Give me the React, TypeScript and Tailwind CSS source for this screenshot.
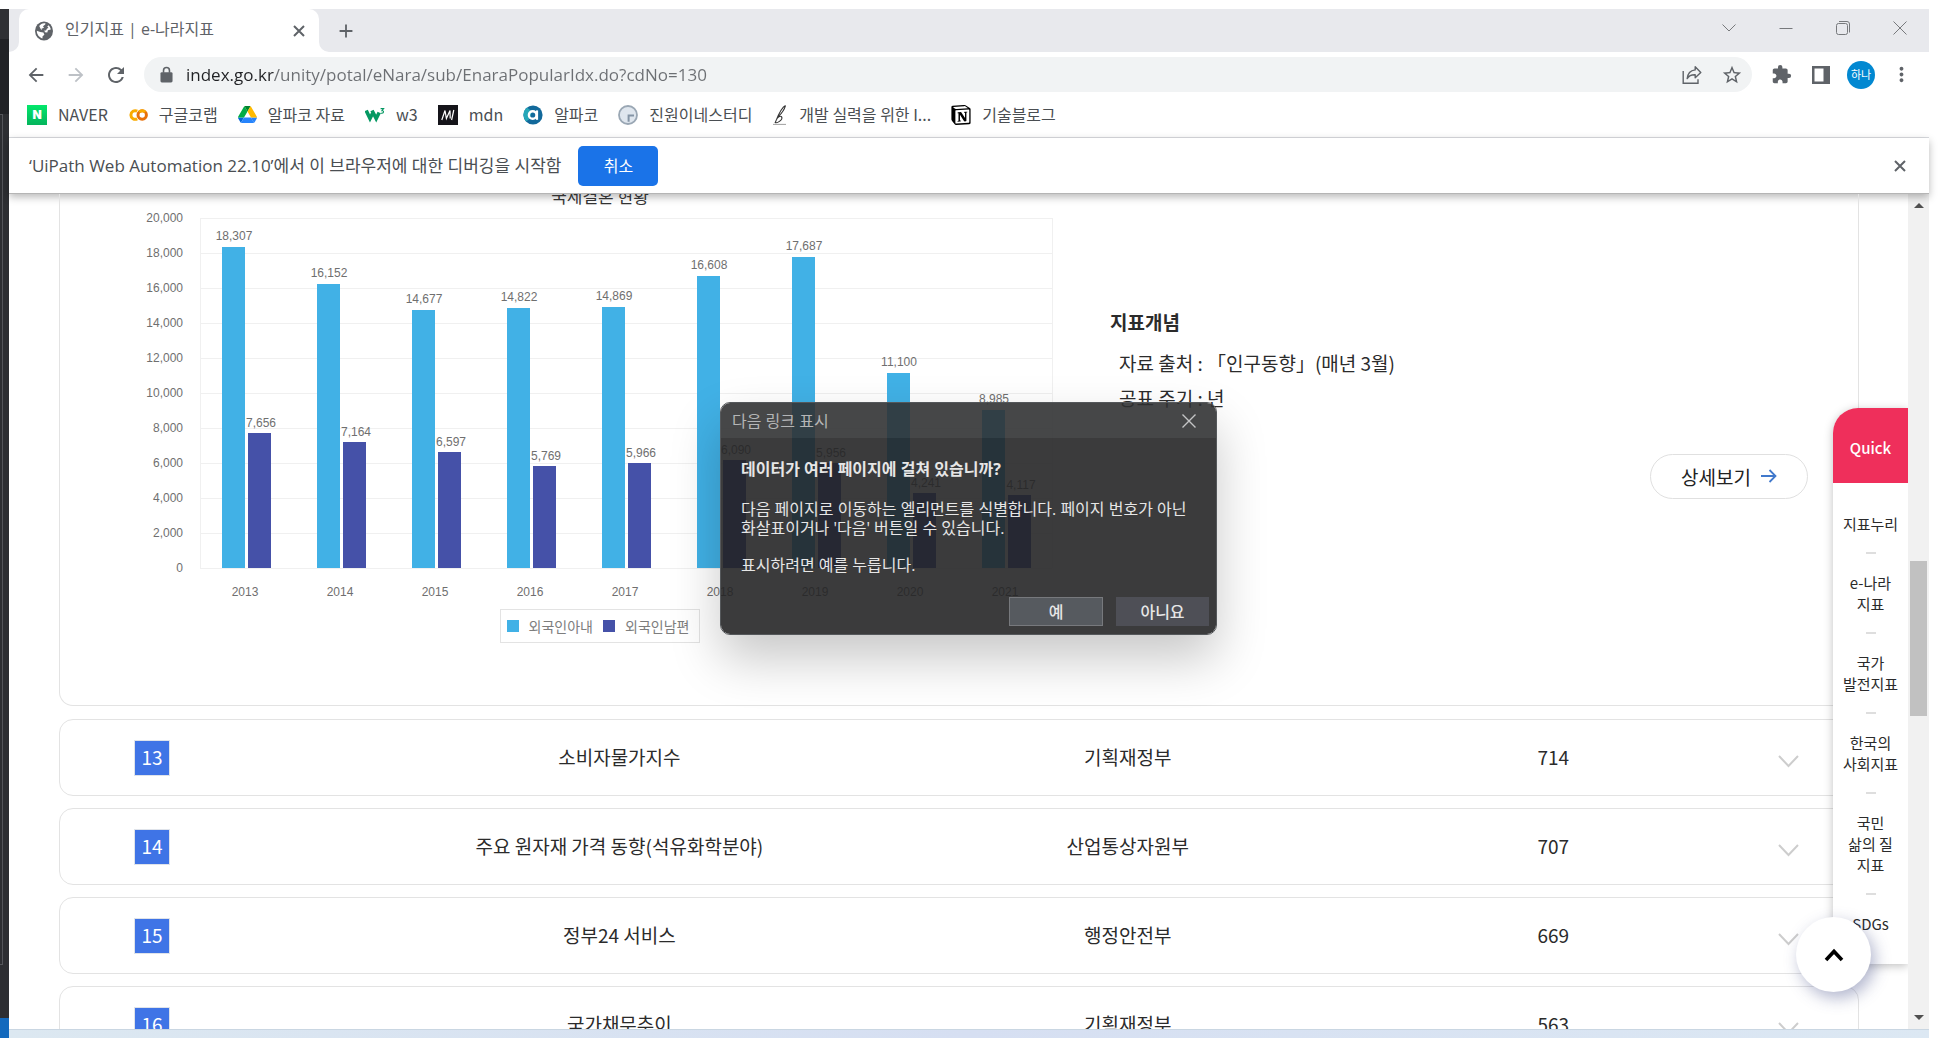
import React from "react";
import {
  MdAdd,
  MdArrowBack,
  MdArrowForward,
  MdExtension,
  MdMoreVert,
  MdRefresh,
  MdStarBorder,
} from "react-icons/md";
import { SiNotion } from "react-icons/si";

const years = [
  { year: "2013", wife: 18307, husband: 7656 },
  { year: "2014", wife: 16152, husband: 7164 },
  { year: "2015", wife: 14677, husband: 6597 },
  { year: "2016", wife: 14822, husband: 5769 },
  { year: "2017", wife: 14869, husband: 5966 },
  { year: "2018", wife: 16608, husband: 6090 },
  { year: "2019", wife: 17687, husband: 5956 },
  { year: "2020", wife: 11100, husband: 4241 },
  { year: "2021", wife: 8985, husband: 4117 },
];

const rows = [
  { rank: 13, name: "소비자물가지수", agency: "기획재정부", count: 714 },
  { rank: 14, name: "주요 원자재 가격 동향(석유화학분야)", agency: "산업통상자원부", count: 707 },
  { rank: 15, name: "정부24 서비스", agency: "행정안전부", count: 669 },
  { rank: 16, name: "국가채무추이", agency: "기획재정부", count: 563 },
];

const quickLinks = [["지표누리"], ["e-나라", "지표"], ["국가", "발전지표"], ["한국의", "사회지표"], ["국민", "삶의 질", "지표"], ["SDGs"]];

const GlobeIcon = () => (
  <svg viewBox="0 0 18 20" className="h-5 w-[18px]">
    <ellipse cx="9" cy="10" rx="9" ry="9.500" fill="#5f6368" />
    <path d="M10.500 2.400c-2.500-.6-5 .6-6.300 2.600L6 8.500l3.500.8.3 1.900 2.500.4.600-2.400 2.900-.6c-.3-1.800-1-3.200-2.200-4.400l-1.200 1.400-2.400-.6z" fill="#fff" />
    <path d="M1.800 9.800c0 3.800 2.400 6.800 5.600 7.600l.2-2.200 1.800-1.400-1-2.200-3.200-.6z" fill="#fff" />
    <path d="M10.500 3.200 8 5.200l1 1.600-2.600 1 1 1.400 3.600.4 1-2.200 1.500-.4" fill="#5f6368" />
  </svg>
);

const LockIcon = () => (
  <svg viewBox="0 0 14 18" className="h-[17px] w-[13px] shrink-0">
    <rect x="0.500" y="6.500" width="13" height="11" rx="1.500" fill="currentColor" />
    <path d="M3.800 7V4.600a3.200 3.200 0 0 1 6.400 0V7" fill="none" stroke="currentColor" strokeWidth="1.700" />
  </svg>
);

const CrossIcon = () => (
  <svg viewBox="0 0 12 12" className="size-3" fill="none" stroke="currentColor" strokeWidth="2">
    <path d="M1 1l10 10M11 1L1 11" />
  </svg>
);

const NaverIcon = () => (
  <span className="flex size-5 items-center justify-center bg-gradient-to-b from-[#03e86b] to-[#04b45c] font-['Inter'] text-[12px] leading-none font-black text-white">
    N
  </span>
);

const ColabIcon = () => (
  <svg viewBox="0 0 20 20" className="size-5" fill="none" strokeWidth="3">
    <path d="M9.200 6.200A4.300 4.300 0 1 0 9.200 13.800" stroke="#f9ab00" />
    <circle cx="14.200" cy="10" r="4.200" stroke="#e8710a" />
    <path d="M11.200 7a4.200 4.200 0 0 1 5.900 0" stroke="#f9ab00" />
  </svg>
);

const DriveIcon = () => (
  <svg viewBox="0 0 87.3 78" className="size-[19px]">
    <path d="m6.6 66.85 3.85 6.65c.8 1.4 1.95 2.5 3.3 3.3l13.75-23.8h-27.5c0 1.55.4 3.1 1.2 4.5z" fill="#0066da" />
    <path d="m43.65 25-13.75-23.8c-1.35.8-2.5 1.9-3.3 3.3l-25.4 44a9.06 9.06 0 0 0-1.2 4.5h27.5z" fill="#00ac47" />
    <path d="m73.55 76.8c1.35-.8 2.5-1.9 3.3-3.3l1.6-2.75 7.65-13.25c.8-1.4 1.2-2.95 1.2-4.5h-27.5l5.85 11.5z" fill="#2684fc" />
    <path d="m43.65 25 13.75-23.8c-1.35-.8-2.9-1.2-4.5-1.2h-18.5c-1.6 0-3.15.45-4.5 1.2z" fill="#00832d" />
    <path d="m59.8 53h-32.3l-13.75 23.8c1.35.8 2.9 1.2 4.5 1.2h50.8c1.6 0 3.15-.45 4.5-1.2z" fill="#2684fc" />
    <path d="m73.4 26.5-12.7-22c-.8-1.4-1.95-2.5-3.3-3.3l-13.75 23.8 16.15 28h27.45c0-1.55-.4-3.1-1.2-4.5z" fill="#ffba00" />
  </svg>
);

const W3Icon = () => (
  <svg viewBox="0 0 20 20" className="size-5" fill="none" stroke="#059862">
    <path d="M1.200 5.500 5 13.500l2.500-5M7 5.500l4.200 8 3-6" strokeWidth="3.600" />
    <path d="M15.600 3.600h3l-1.600 2c2.200-.2 2.200 3.200-1.400 2.600" strokeWidth="1.100" />
  </svg>
);

const MdnIcon = () => (
  <svg viewBox="0 0 20 20" className="size-5">
    <rect width="20" height="20" fill="#15141a" />
    <path d="M3.800 15 7 5.500l1.400 8L12 5.500l.2 8M15.800 5l-2.200 10" fill="none" stroke="#fff" strokeWidth="1.200" />
  </svg>
);

const AlpacoIcon = () => (
  <svg viewBox="0 0 20 20" className="size-5" fill="none">
    <circle cx="10" cy="10" r="9.600" fill="#12699b" />
    <path d="M3 16.500A9.600 9.600 0 0 1 4 2.500l5 4-3 8z" fill="#25a7b8" />
    <circle cx="9.700" cy="10" r="3.800" stroke="#fff" strokeWidth="2.400" />
    <path d="M14 5.400v9.400" stroke="#fff" strokeWidth="2.200" />
  </svg>
);

const ClockIcon = () => (
  <svg viewBox="0 0 20 20" className="size-5" fill="none">
    <circle cx="10" cy="10" r="9" fill="#dfe6ee" stroke="#9aa7b4" strokeWidth="1.800" />
    <path d="M16 10.600H10.600v6.200" stroke="#8494a5" strokeWidth="2" />
  </svg>
);

const QuillIcon = () => (
  <svg viewBox="0 0 16 20" className="h-5 w-4" fill="none" stroke="#333" strokeWidth="1.100">
    <path d="M13.500.600C10 2 7 8 3.200 17.600 5 18.400 11.500 15 9.500 11.600 8 10.400 5.500 12.500 4.500 14.500M13.500.600C12 6 9 9 6.400 11.400" />
    <path d="M1 19.400h13" stroke="#888" strokeWidth="0.800" />
  </svg>
);

const bookmarks = [
  { label: "NAVER", icon: <NaverIcon /> },
  { label: "구글코랩", icon: <ColabIcon /> },
  { label: "알파코 자료", icon: <DriveIcon /> },
  { label: "w3", icon: <W3Icon /> },
  { label: "mdn", icon: <MdnIcon /> },
  { label: "알파코", icon: <AlpacoIcon /> },
  { label: "진원이네스터디", icon: <ClockIcon /> },
  { label: "개발 실력을 위한 I...", icon: <QuillIcon /> },
  { label: "기술블로그", icon: <SiNotion className="size-5 text-black" /> },
];

function TabStrip() {
  return (
    <div className="flex h-[43px] shrink-0 bg-[#e8e9ed] pl-[10px]">
      <div className="relative flex w-[300px] items-center rounded-t-[10px] bg-white pr-[12px] pl-[16px]">
        <svg viewBox="0 0 10 10" className="absolute bottom-0 -left-[10px] size-[10px]" fill="#fff">
          <path d="M10 0v10H0A10 10 0 0 0 10 0z" />
        </svg>
        <svg viewBox="0 0 10 10" className="absolute -right-[10px] bottom-0 size-[10px]" fill="#fff">
          <path d="M0 0v10h10A10 10 0 0 1 0 0z" />
        </svg>
        <GlobeIcon />
        <span className="ml-[12px] flex-1 truncate pb-[3px] font-['Open_Sans','Noto_Sans_CJK_KR',sans-serif] text-[16px] text-[#5f6368]">인기지표 | e-나라지표</span>
        <button type="button" aria-label="탭 닫기" className="flex size-4 items-center justify-center text-[#5f6368]">
          <CrossIcon />
        </button>
      </div>
      <button type="button" aria-label="새 탭" className="ml-[16px] flex w-[22px] items-center justify-center text-[#5f6368]">
        <MdAdd className="size-[22px]" />
      </button>
      <div className="ml-auto flex h-[37px] pr-px text-[#77797c]">
        <button type="button" aria-label="탭 검색" className="flex w-[57px] items-center justify-center">
          <svg viewBox="0 0 14 14" className="size-[14px]" fill="none" stroke="currentColor">
            <path d="M.5 3.500 7 10l6.500-6.500" />
          </svg>
        </button>
        <button type="button" aria-label="최소화" className="flex w-[57px] items-center justify-center">
          <svg viewBox="0 0 14 14" className="size-[14px]" fill="none" stroke="currentColor">
            <path d="M.5 7.500h13" />
          </svg>
        </button>
        <button type="button" aria-label="이전 크기로 복원" className="flex w-[57px] items-center justify-center">
          <svg viewBox="0 0 14 14" className="size-[14px]" fill="none" stroke="currentColor">
            <rect x="0.500" y="2.500" width="11" height="11" rx="2" />
            <path d="M3 .5h8a2.500 2.500 0 0 1 2.500 2.500v8.500" />
          </svg>
        </button>
        <button type="button" aria-label="닫기" className="flex w-[57px] items-center justify-center">
          <svg viewBox="0 0 14 14" className="size-[14px]" fill="none" stroke="currentColor">
            <path d="M.5.5l13 13M13.500.500l-13 13" />
          </svg>
        </button>
      </div>
    </div>
  );
}

function Toolbar() {
  return (
    <div className="flex h-[45px] shrink-0 items-center pr-[8px] pl-[7px] text-[#5f6368]">
      <button type="button" aria-label="뒤로" className="flex w-[40px] justify-center">
        <MdArrowBack className="size-[22px]" />
      </button>
      <button type="button" aria-label="앞으로" className="flex w-[40px] justify-center text-[#bdc1c6]">
        <MdArrowForward className="size-[22px]" />
      </button>
      <button type="button" aria-label="새로고침" className="flex w-[40px] justify-center">
        <MdRefresh className="size-[24px]" />
      </button>
      <div className="ml-[8px] flex h-[35px] flex-1 items-center rounded-full bg-[#f1f3f4] pl-[16px]">
        <LockIcon />
        <input
          aria-label="주소"
          readOnly
          value="index.go.kr/unity/potal/eNara/sub/EnaraPopularIdx.do?cdNo=130"
          className="ml-[13px] min-w-0 flex-1 bg-[linear-gradient(to_right,#202124_88px,#6c6f73_88px)] bg-clip-text font-['Open_Sans','Noto_Sans_CJK_KR',sans-serif] text-[17px] text-transparent outline-none"
        />
        <button type="button" aria-label="공유" className="flex w-[40px] justify-center">
          <svg viewBox="0 0 20 20" className="size-5" fill="none" stroke="currentColor" strokeWidth="1.400">
            <path d="M1.200 6v12.300H16v-4" />
            <path d="M13.200 1.800 18.800 7.500l-5.600 5.300V9.800C9 9.600 6.800 11 5.200 13.600 5.600 8.800 8 5.600 13.200 4.900z" strokeLinejoin="round" />
          </svg>
        </button>
        <button type="button" aria-label="북마크 추가" className="flex w-[40px] justify-center">
          <MdStarBorder className="size-[22px]" />
        </button>
      </div>
      <button type="button" aria-label="확장 프로그램" className="ml-[9px] flex w-[40px] justify-center">
        <MdExtension className="size-[21px]" />
      </button>
      <button type="button" aria-label="측면 패널" className="flex w-[40px] justify-center">
        <svg viewBox="0 0 18 18" className="size-[18px]">
          <path d="M0 0h18v18H0zM2.500 2.500v13h9v-13z" fill="currentColor" fillRule="evenodd" />
        </svg>
      </button>
      <button type="button" className="flex w-[40px] justify-center">
        <span className="flex size-7 items-center justify-center rounded-full bg-[#0288d1] text-[11px] leading-none text-white">하나</span>
      </button>
      <button type="button" aria-label="메뉴" className="flex w-[40px] justify-center">
        <MdMoreVert className="size-[23px]" />
      </button>
    </div>
  );
}

function Chart() {
  const step = 95;
  const y = (v: number) => Math.round(358 - (v * 350) / 20000);
  return (
    <svg
      viewBox="0 0 920 400"
      role="img"
      aria-label="국제결혼 현황"
      className="h-[400px] w-[920px] font-['Liberation_Sans',sans-serif] text-[12px]"
      fill="#6f6f6f"
    >
      {Array.from({ length: 11 }, (_, i) => (
        <g key={i}>
          <path d={`M60 ${9.5 + i * 35}H912`} stroke="#f0f0f0" />
          <text x="43" y={13 + i * 35} textAnchor="end">
            {(20000 - i * 2000).toLocaleString("en-US")}
          </text>
        </g>
      ))}
      <path d="M60.500 9v350M912.500 9v350" stroke="#f0f0f0" />
      {years.map((d, i) => {
        const x = 60 + i * step;
        return (
          <g key={d.year} textAnchor="middle">
            <rect x={x + 22} y={y(d.wife)} width="23" height={359 - y(d.wife)} fill="#41b1e6" />
            <rect x={x + 48} y={y(d.husband)} width="23" height={359 - y(d.husband)} fill="#4551a8" />
            <text x={x + 34} y={y(d.wife) - 7}>
              {d.wife.toLocaleString("en-US")}
            </text>
            <text x={x + 61} y={y(d.husband) - 6}>
              {d.husband.toLocaleString("en-US")}
            </text>
            <text x={x + 45} y="387">
              {d.year}
            </text>
          </g>
        );
      })}
    </svg>
  );
}

function IndicatorCard() {
  return (
    <section className="flex h-[512px] rounded-b-[14px] border-x border-b border-[#e3e3e3] pl-[80px]">
      <div className="flex w-[920px] shrink-0 flex-col items-center">
        <h2 className="-mt-[10px] h-[25px] text-[17px] leading-[24px] text-[#333]">국제결혼 현황</h2>
        <Chart />
        <div className="flex h-[34px] items-center border border-[#e3e3e3] pr-[10px] pl-[6px] text-[14px] leading-none text-[#7d7d7d]">
          <span className="size-3 bg-[#41b1e6]" />
          <span className="ml-[10px]">외국인아내</span>
          <span className="ml-[10px] size-3 bg-[#4551a8]" />
          <span className="ml-[10px]">외국인남편</span>
        </div>
      </div>
      <div className="flex flex-1 flex-col pt-[110px] pr-[50px] pl-[50px] text-[19px] leading-[35px] text-[#2b2b2b]">
        <h3 className="font-bold">지표개념</h3>
        <p className="mt-[6px] pl-[9px]">자료 출처 : 「인구동향」(매년 3월)</p>
        <p className="pl-[9px]">공표 주기 : 년</p>
        <a href="#detail" className="mt-[39px] flex h-[45px] w-[158px] items-center justify-center gap-[10px] self-end rounded-full border border-[#e0e0e0] pb-px text-[#222]">
          상세보기
          <svg viewBox="0 0 16 14" className="h-[14px] w-4" fill="none" stroke="#4179cc" strokeWidth="1.800">
            <path d="M0 7h15M8.500 1l6 6-6 6" />
          </svg>
        </a>
      </div>
    </section>
  );
}

function RankingList() {
  return (
    <ul className="mt-[13px] flex flex-col gap-[12px]">
      {rows.map((r) => (
        <li
          key={r.rank}
          className="grid h-[77px] shrink-0 grid-cols-[280fr_560fr_458fr_394fr_108fr] items-center rounded-[14px] border border-[#e3e3e3] text-center text-[19px] text-[#2b2b2b]"
        >
          <span className="ml-[74px] flex size-[36px] items-center justify-center border border-[#dfe3ea] bg-[#3f74e6] pb-[2px] leading-none text-white">{r.rank}</span>
          <span>{r.name}</span>
          <span>{r.agency}</span>
          <span>{r.count}</span>
          <button type="button" aria-label={`${r.name} 펼치기`} className="mt-[8px] ml-[28px] w-[21px]">
            <svg viewBox="0 0 21 13" className="h-[13px] w-[21px]" fill="none" stroke="#cdcdcd" strokeWidth="2">
              <path d="M1 1l9.500 10L20 1" />
            </svg>
          </button>
        </li>
      ))}
    </ul>
  );
}

function QuickMenu() {
  return (
    <nav className="absolute top-[214px] right-0 w-[75px] rounded-tl-[25px] bg-white shadow-[0_2px_10px_rgba(0,0,0,0.25)]">
      <div className="flex h-[75px] items-center justify-center rounded-tl-[25px] bg-[#ef2f5b] pt-[6px] text-[15px] font-medium text-white">Quick</div>
      <ul className="pt-[12px] pb-[12px] text-center text-[15px] leading-[21px] text-[#2b2b2b]">
        {quickLinks.map((lines, i) => (
          <li key={lines.join("")}>
            {i > 0 && <span className="mx-auto block h-[2px] w-[10px] bg-[#dedede]" />}
            <a href="#quick" className="block py-[18px]">
              {lines.map((l) => (
                <span key={l} className="block">
                  {l}
                </span>
              ))}
            </a>
          </li>
        ))}
      </ul>
    </nav>
  );
}

function NextLinkDialog() {
  return (
    <div
      role="dialog"
      aria-label="다음 링크 표시"
      className="absolute top-[402px] left-[720px] w-[497px] overflow-hidden rounded-[10px] border border-[#55585b] text-[#e6e6e6] shadow-[0_24px_50px_rgba(0,0,0,0.22)]"
    >
      <header className="flex h-[35px] items-center justify-between bg-[#2f3031]/89 pr-[20px] pl-[11px] font-['Open_Sans','Noto_Sans_CJK_KR',sans-serif]">
        <h2 className="text-[16px] leading-none text-[#b4b5b6]">다음 링크 표시</h2>
        <button type="button" aria-label="닫기">
          <svg viewBox="0 0 14 14" className="size-[14px]" fill="none" stroke="#c4c5c6" strokeWidth="1.400">
            <path d="M.5.5l13 13M13.500.500l-13 13" />
          </svg>
        </button>
      </header>
      <div className="bg-[#232324]/89 pt-[22px] pr-[7px] pb-[8px] pl-[20px] font-['Open_Sans','Noto_Sans_CJK_KR',sans-serif] text-[16px] leading-[19px]">
        <p className="font-bold">데이터가 여러 페이지에 걸쳐 있습니까?</p>
        <p className="mt-[21px] whitespace-nowrap">
          다음 페이지로 이동하는 엘리먼트를 식별합니다. 페이지 번호가 아닌
          <br />
          화살표이거나 '다음' 버튼일 수 있습니다.
        </p>
        <p className="mt-[18px]">표시하려면 예를 누릅니다.</p>
        <div className="mt-[22px] flex justify-end gap-[13px] font-medium">
          <button type="button" className="h-[29px] w-[94px] border border-[#77797d] bg-[#565a5f] leading-none">
            예
          </button>
          <button type="button" className="h-[29px] w-[93px] bg-[#4e4f56] leading-none">
            아니요
          </button>
        </div>
      </div>
    </div>
  );
}

export default function App() {
  return (
    <div className="relative flex h-screen overflow-hidden bg-white pt-[9px] pr-[9px] font-['Noto_Sans_CJK_KR',sans-serif]">
      <div className="flex w-[9px] shrink-0 flex-col bg-[#2d2e32]">
        <div className="h-[30px] bg-[#2f3034]" />
        <div className="h-[75px] bg-[#212226]" />
        <div className="w-[3px] flex-1 border-t border-r border-b border-[#54555a]" />
        <div className="h-[53px]" />
        <div className="h-[20px] bg-[#1369bd]" />
      </div>
      <div className="flex min-w-0 flex-1 flex-col">
        <TabStrip />
        <Toolbar />
        <nav className="flex h-[41px] shrink-0 items-center gap-[20px] border-b border-[#dadce0] pb-[5px] pl-[18px] font-['Noto_Sans_CJK_KR',sans-serif] text-[16px] text-[#4a4e52]">
          {bookmarks.map((b) => (
            <a key={b.label} href="#bookmark" className="flex items-center gap-[11px] whitespace-nowrap">
              {b.icon}
              <span className="pb-[2px] leading-[20px]">{b.label}</span>
            </a>
          ))}
        </nav>
        <div className="relative flex h-[56px] shrink-0 items-center border-b border-[#b5b5b5] pr-[23px] pl-[20px] font-['Open_Sans','Noto_Sans_CJK_KR',sans-serif] text-[17px] text-[#4a4e52] shadow-[0_3px_8px_rgba(0,0,0,0.28)]">
          <span className="whitespace-nowrap">‘UiPath Web Automation 22.10’에서 이 브라우저에 대한 디버깅을 시작함</span>
          <button type="button" className="ml-[17px] h-[40px] w-[80px] rounded-[5px] bg-[#1a73e8] text-[16px] text-white">
            취소
          </button>
          <button type="button" aria-label="알림 닫기" className="ml-auto text-[#5f6368]">
            <CrossIcon />
          </button>
        </div>
        <div className="flex min-h-0 flex-1">
          <main className="relative min-w-0 flex-1 overflow-hidden pr-[49px] pl-[50px]">
            <IndicatorCard />
            <RankingList />
            <QuickMenu />
            <button
              type="button"
              aria-label="맨 위로"
              className="absolute right-[37px] bottom-[37px] flex size-[75px] items-center justify-center rounded-full bg-white shadow-[4px_6px_16px_rgba(60,70,130,0.4)]"
            >
              <svg viewBox="0 0 20 14" className="h-[14px] w-5" fill="none" stroke="#000" strokeWidth="3.600">
                <path d="M2 12l8-8.500L18 12" />
              </svg>
            </button>
          </main>
          <div className="flex w-[21px] shrink-0 flex-col items-center bg-[#f1f1f1] py-[9px]">
            <svg viewBox="0 0 10 5" className="h-[5px] w-[10px]" fill="#505050">
              <path d="M5 0l5 5H0z" />
            </svg>
            <div className="mt-[353px] h-[155px] w-[17px] bg-[#c1c1c1]" />
            <svg viewBox="0 0 10 5" className="mt-auto h-[5px] w-[10px]" fill="#505050">
              <path d="M0 0h10L5 5z" />
            </svg>
          </div>
        </div>
        <div className="h-[9px] shrink-0 border-t border-[#c9d6e2] bg-gradient-to-r from-[#dce8f1] via-[#d6dff2] to-[#dce8f3]" />
      </div>
      <NextLinkDialog />
    </div>
  );
}
